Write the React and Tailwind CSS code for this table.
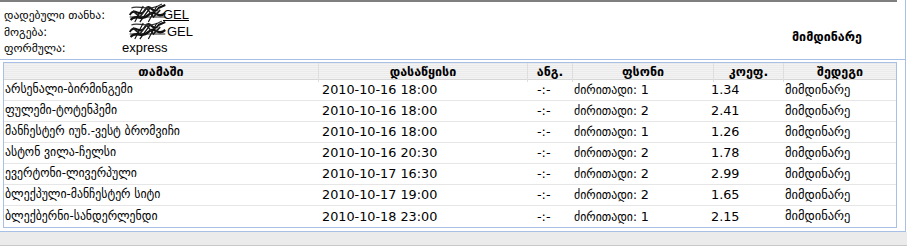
const rows = [
  ["არსენალი-ბირმინგემი", "2010-10-16 18:00", "1", "1.34"],
  ["ფულემი-ტოტენჰემი", "2010-10-16 18:00", "2", "2.41"],
  ["მანჩესტერ იუნ.-ვესტ ბრომვიჩი", "2010-10-16 18:00", "1", "1.26"],
  ["ასტონ ვილა-ჩელსი", "2010-10-16 20:30", "2", "1.78"],
  ["ევერტონი-ლივერპული", "2010-10-17 16:30", "2", "2.99"],
  ["ბლექპული-მანჩესტერ სიტი", "2010-10-17 19:00", "2", "1.65"],
  ["ბლექბერნი-სანდერლენდი", "2010-10-18 23:00", "1", "2.15"],
];

const geo = { fontFamily: '"DejaVu Sans", sans-serif' };

// redaction scribble drawn over the amounts
function Scribble({ w = 46 }) {
  return (
    <svg width={w} height="22" viewBox="0 0 46 22" preserveAspectRatio="none" className="absolute left-0 -top-[5px]">
      <path d="M2 13 C8 4 14 17 20 8 S30 15 36 6 L44 3" stroke="#111" strokeWidth="2.2" fill="none" />
      <path d="M3 18 C10 11 16 20 24 13 S34 18 44 11" stroke="#111" strokeWidth="2.4" fill="none" />
      <path d="M6 9 L14 15 L22 6 L30 15 L38 8" stroke="#222" strokeWidth="1.8" fill="none" />
      <path d="M4 6 C12 2 24 11 40 2" stroke="#333" strokeWidth="1.3" fill="none" />
      <path d="M8 20 L18 4 M24 20 L34 4 M14 20 L26 6" stroke="#111" strokeWidth="1.4" fill="none" />
      <path d="M2 15 L44 15" stroke="#111" strokeWidth="1" fill="none" />
    </svg>
  );
}

export default function App() {
  return (
    <div className="w-[907px] h-[248px] bg-white overflow-hidden" style={geo}>
      <div className="w-[906px] h-[232px] border-r border-[#a8bfe6] flex flex-col">
        <div className="w-[897px] h-[2px] bg-[#7f7f7f]" />
        {/* --- Info section --- */}
        <div className="h-[58px] border-b border-[#a8bfe6] flex items-start pt-[5px] text-[11.5px] text-black">
          <div className="pl-[4px] flex flex-col leading-[16.5px]">
            <div className="flex">
              <span className="w-[124px]">დადებული თანხა:</span>
              <span className="relative text-[13px] font-['Liberation_Sans'] pl-[35px]">
                <Scribble w={39} />
                <span className="underline">GEL</span>
              </span>
            </div>
            <div className="flex">
              <span className="w-[124px]">მოგება:</span>
              <span className="relative text-[13px] font-['Liberation_Sans'] pl-[39px]">
                <Scribble w={39} />
                GEL
              </span>
            </div>
            <div className="flex">
              <span className="w-[118px]">ფორმულა:</span>
              <span className="text-[13px] font-['Liberation_Sans']">express</span>
            </div>
          </div>
          <div className="ml-auto mr-[43px] mt-[21px] font-bold text-[12.5px]">მიმდინარე</div>
        </div>

        {/* --- Bets table --- */}
        <div className="ml-[3px] mt-[2px] w-[894px] border border-[#a8bfe6] text-[11.8px] text-black">
          <div className="grid grid-cols-[315px_209px_45px_141px_70px_1fr] h-[17px] bg-[repeating-linear-gradient(0deg,#f3f3f3_0px,#f3f3f3_1px,#ebebeb_1px,#ebebeb_2px)] border-b border-[#d6d6d6] font-bold text-[12.5px]">
            {["თამაში", "დასაწყისი", "ანგ.", "ფსონი", "კოეფ.", "შედეგი"].map((h, i) => (
              <div key={h} className={`flex items-center justify-center ${i < 5 ? "border-r border-[#dedede]" : ""}`}>
                {h}
              </div>
            ))}
          </div>
          {rows.map(([game, date, stake, coef], i) => (
            <div
              key={game}
              className={`grid grid-cols-[315px_209px_45px_141px_70px_1fr] h-[21px] items-center ${i < rows.length - 1 ? "border-b border-[#e6e6e6]" : ""}`}
            >
              <div className="pl-[1px]">{game}</div>
              <div className="pl-[3px] text-[12.8px]">{date}</div>
              <div className="pl-[9px] text-[12.8px]">-:-</div>
              <div className="pl-[1px]">
                ძირითადი: <span className="text-[12.8px]">{stake}</span>
              </div>
              <div className="text-[12.8px] -ml-[3px]">{coef}</div>
              <div className="pl-[1px] text-[12.5px]">მიმდინარე</div>
            </div>
          ))}
        </div>
        <div className="mt-auto border-b border-[#a8bfe6]" />
      </div>
      <div className="h-[14px] bg-[#ebebeb] border-b border-[#c8c8c8]" />
    </div>
  );
}
